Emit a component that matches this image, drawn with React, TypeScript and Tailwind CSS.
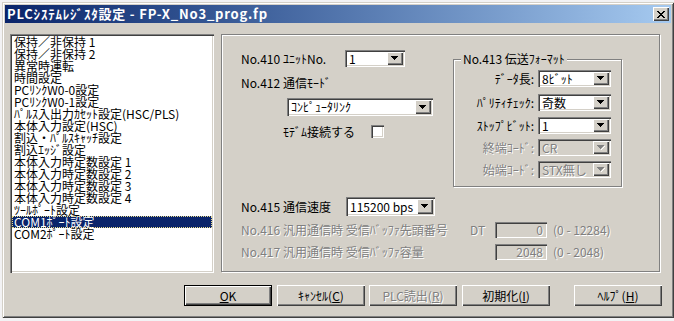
import React from 'react';

const SUNKEN = 'shadow-[inset_1px_1px_#808080,inset_2px_2px_#404040,inset_-1px_-1px_#ffffff,inset_-2px_-2px_#d4d0c8]';
const RAISED = 'shadow-[inset_1px_1px_#ffffff,inset_-1px_-1px_#404040,inset_-2px_-2px_#808080]';
const ETCHED = 'border border-[#808080] shadow-[inset_1px_1px_#ffffff,1px_1px_#ffffff]';
const GREY = 'text-[#808080] [text-shadow:1px_1px_0_#ffffff]';

const items = [
  '保持／非保持 1',
  '保持／非保持 2',
  '異常時運転',
  '時間設定',
  'PCﾘﾝｸW0-0設定',
  'PCﾘﾝｸW0-1設定',
  'ﾊﾟﾙｽ入出力ｶｾｯﾄ設定(HSC/PLS)',
  '本体入力設定(HSC)',
  '割込・ﾊﾟﾙｽｷｬｯﾁ設定',
  '割込ｴｯｼﾞ設定',
  '本体入力時定数設定 1',
  '本体入力時定数設定 2',
  '本体入力時定数設定 3',
  '本体入力時定数設定 4',
  'ﾂｰﾙﾎﾟｰﾄ設定',
  'COM1ﾎﾟｰﾄ設定',
  'COM2ﾎﾟｰﾄ設定',
];

function Arrow({ disabled }: { disabled?: boolean }) {
  const c = disabled ? '#808080' : '#000000';
  return (
    <svg width="8" height="5" viewBox="0 0 8 5" shapeRendering="crispEdges">
      {disabled && (
        <g fill="#ffffff">
          <rect x="4" y="4" width="1" height="1" />
          <rect x="5" y="3" width="1" height="1" />
          <rect x="6" y="2" width="1" height="1" />
          <rect x="7" y="1" width="1" height="1" />
        </g>
      )}
      <rect x="0" y="0" width="7" height="1" fill={c} />
      <rect x="1" y="1" width="5" height="1" fill={c} />
      <rect x="2" y="2" width="3" height="1" fill={c} />
      <rect x="3" y="3" width="1" height="1" fill={c} />
    </svg>
  );
}

function Combo({ value, size, disabled }: { value: string; size: string; disabled?: boolean }) {
  return (
    <div className={`flex p-[2px] ${size} ${SUNKEN} ${disabled ? 'bg-[#d4d0c8]' : 'bg-white'}`}>
      <div className={`flex-1 flex items-center pl-[2px] whitespace-nowrap ${disabled ? GREY : 'text-black'}`}>{value}</div>
      <div className={`w-[16px] h-full bg-[#d4d0c8] flex items-center justify-center ${RAISED}`}>
        <Arrow disabled={disabled} />
      </div>
    </div>
  );
}

function Btn({ children, def, disabled, gap }: { children: React.ReactNode; def?: boolean; disabled?: boolean; gap: string }) {
  return (
    <div
      className={`${gap} w-[88px] h-[21px] flex items-center justify-center bg-[#d4d0c8] ${RAISED} ${
        def ? 'border border-black' : ''
      } ${disabled ? GREY : 'text-black'}`}
    >
      {children}
    </div>
  );
}

export default function App() {
  return (
    <div className="w-[674px] h-[321px] overflow-hidden bg-[#f2f2f4] pt-[2px] pl-[2px] font-['Noto_Sans_CJK_JP',sans-serif] text-[12px] leading-[12px] text-black">
      <div className="w-[672px] h-[316px] bg-[#d4d0c8] p-[3px] flex flex-col shadow-[inset_1px_1px_#d4d0c8,inset_-1px_-1px_#404040,inset_2px_2px_#ffffff,inset_-2px_-2px_#808080]">
        {/* title bar */}
        <div className="h-[18px] flex items-center pl-[2px] pr-[2px] bg-linear-to-r from-[#0a246a] to-[#a6caf0]">
          <span className="text-white font-bold text-[13px] tracking-[0.8px] whitespace-nowrap">PLCｼｽﾃﾑﾚｼﾞｽﾀ設定 - FP-X_No3_prog.fp</span>
          <div className={`ml-auto w-[16px] h-[14px] bg-[#d4d0c8] flex items-center justify-center ${RAISED}`}>
            <svg width="8" height="7" viewBox="0 0 8 7" shapeRendering="crispEdges" fill="#000000">
              <rect x="0" y="0" width="2" height="1" />
              <rect x="6" y="0" width="2" height="1" />
              <rect x="1" y="1" width="2" height="1" />
              <rect x="5" y="1" width="2" height="1" />
              <rect x="2" y="2" width="4" height="1" />
              <rect x="3" y="3" width="2" height="1" />
              <rect x="2" y="4" width="4" height="1" />
              <rect x="1" y="5" width="2" height="1" />
              <rect x="5" y="5" width="2" height="1" />
              <rect x="0" y="6" width="2" height="1" />
              <rect x="6" y="6" width="2" height="1" />
            </svg>
          </div>
        </div>

        {/* body */}
        <div className="flex mt-[11px] ml-[5px]">
          {/* list box */}
          <div className={`w-[204px] h-[239px] bg-white p-[2px] ${SUNKEN}`}>
            {items.map((it) => (
              <div
                key={it}
                className={`h-[12px] pl-[2px] whitespace-nowrap ${
                  it === 'COM1ﾎﾟｰﾄ設定' ? 'bg-[#0a246a] text-white outline-1 outline-dotted outline-[#e8dc8c] -outline-offset-1' : ''
                }`}
              >
                {it}
              </div>
            ))}
          </div>

          {/* settings panel */}
          <div className={`ml-[7px] w-[439px] h-[238px] pl-[19px] pt-[15px] ${ETCHED}`}>
            <div className="flex items-start">
              <div className="w-[212px] flex flex-col">
                <div className="flex items-center h-[17px]">
                  <span className="w-[42px]">No.410</span>
                  <span className="w-[62px]">ﾕﾆｯﾄNo.</span>
                  <Combo value="1" size="w-[60px] h-[17px]" />
                </div>
                <div className="flex items-center h-[12px] mt-[10px]">
                  <span className="w-[42px]">No.412</span>
                  <span>通信ﾓｰﾄﾞ</span>
                </div>
                <div className="ml-[46px] mt-[9px]">
                  <Combo value="ｺﾝﾋﾟｭｰﾀﾘﾝｸ" size="w-[146px] h-[18px]" />
                </div>
                <div className="flex items-center h-[13px] ml-[42px] mt-[9px]">
                  <span className="w-[88px]">ﾓﾃﾞﾑ接続する</span>
                  <div className={`w-[13px] h-[13px] bg-white ${SUNKEN}`} />
                </div>
              </div>

              {/* group box */}
              <div className={`relative mt-[9px] w-[169px] h-[128px] pt-[10px] ${ETCHED}`}>
                <span className="absolute -top-[7px] left-[7px] px-[2px] bg-[#d4d0c8] whitespace-nowrap">No.413 伝送ﾌｫｰﾏｯﾄ</span>
                {[
                  { l: 'ﾃﾞｰﾀ長:', v: '8ﾋﾞｯﾄ', m: '' },
                  { l: 'ﾊﾟﾘﾃｨﾁｪｯｸ:', v: '奇数', m: 'mt-[7px]' },
                  { l: 'ｽﾄｯﾌﾟﾋﾞｯﾄ:', v: '1', m: 'mt-[6px]' },
                  { l: '終端ｺｰﾄﾞ:', v: 'CR', m: 'mt-[5px]', d: true },
                  { l: '始端ｺｰﾄﾞ:', v: 'STX無し', m: 'mt-[5px]', d: true },
                ].map((r) => (
                  <div key={r.l} className={`flex items-center ${r.m}`}>
                    <span className={`w-[80px] text-right whitespace-nowrap ${r.d ? GREY : ''}`}>{r.l}</span>
                    <div className="ml-[4px]">
                      <Combo value={r.v} size="w-[73px] h-[17px]" disabled={r.d} />
                    </div>
                  </div>
                ))}
              </div>
            </div>

            <div className="flex items-center h-[19px] mt-[10px]">
              <span className="w-[42px]">No.415</span>
              <span className="w-[63px]">通信速度</span>
              <Combo value="115200 bps" size="w-[89px] h-[19px]" />
            </div>

            {[
              { no: 'No.416', l: '汎用通信時 受信ﾊﾞｯﾌｧ先頭番号', dt: 'DT', v: '0', r: '(0 - 12284)' },
              { no: 'No.417', l: '汎用通信時 受信ﾊﾞｯﾌｧ容量', dt: '', v: '2048', r: '(0 - 2048)' },
            ].map((row) => (
              <div key={row.no} className={`flex items-center h-[16px] mt-[6px] ${GREY}`}>
                <span className="w-[42px]">{row.no}</span>
                <span className="w-[187px] whitespace-nowrap">{row.l}</span>
                <span className="w-[25px]">{row.dt}</span>
                <div className={`w-[52px] h-[16px] bg-[#d4d0c8] flex items-center justify-end pr-[4px] ${SUNKEN}`}>{row.v}</div>
                <span className="ml-[6px] whitespace-nowrap">{row.r}</span>
              </div>
            ))}
          </div>
        </div>

        {/* buttons */}
        <div className="flex mt-[12px] ml-[179px]">
          <Btn def gap="">
            <span><span className="underline">O</span>K</span>
          </Btn>
          <Btn gap="ml-[5px]">
            <span>ｷｬﾝｾﾙ(<span className="underline">C</span>)</span>
          </Btn>
          <Btn disabled gap="ml-[4px]">
            <span>PLC読出(<span className="underline">R</span>)</span>
          </Btn>
          <Btn gap="ml-[5px]">
            <span>初期化(<span className="underline">I</span>)</span>
          </Btn>
          <Btn gap="ml-[24px]">
            <span>ﾍﾙﾌﾟ(<span className="underline">H</span>)</span>
          </Btn>
        </div>
      </div>
    </div>
  );
}
